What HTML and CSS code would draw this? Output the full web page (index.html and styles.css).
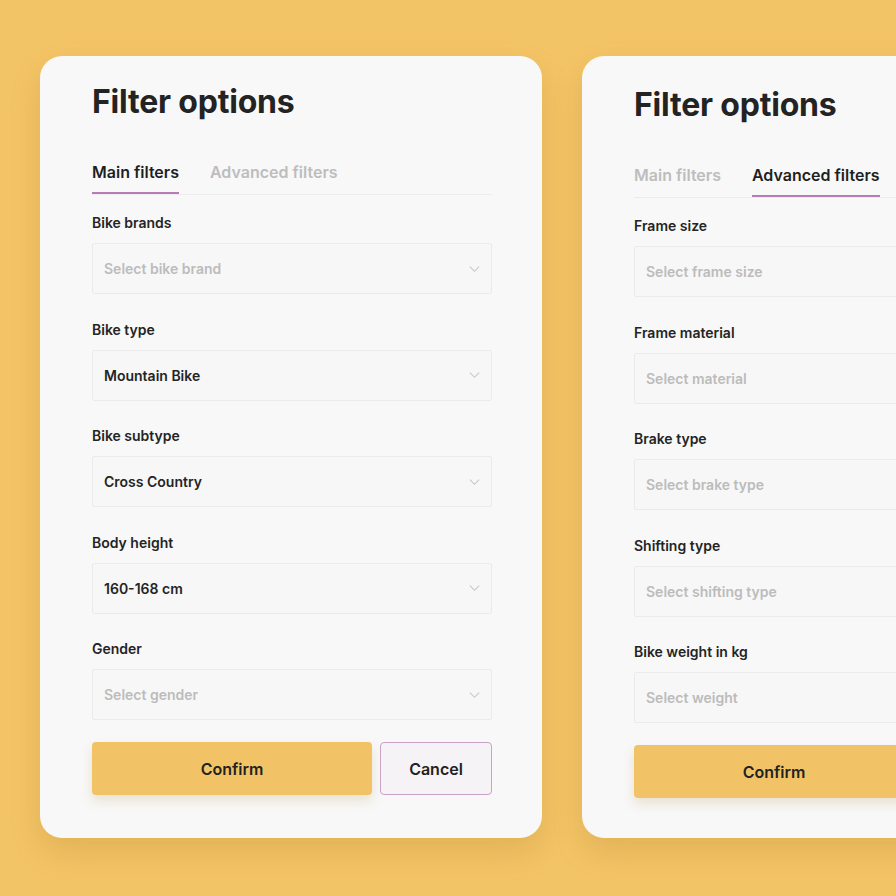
FILE: index.html
```html
<!DOCTYPE html>
<html lang="en">
<head>
<meta charset="utf-8">
<title>Filter options</title>
<link rel="stylesheet" href="styles.css">
</head>
<body>
<main class="stage">
  <section class="card">
    <h1 class="title">Filter options</h1>
    <nav class="tabs">
      <span class="tab tab-active">Main filters</span>
      <span class="tab">Advanced filters</span>
    </nav>
    <div class="fields">
      <div class="field">
        <label class="label">Bike brands</label>
        <div class="select placeholder">Select bike brand<svg class="chev" viewBox="0 0 12 8"><path d="M1 1.5 6 6.5 11 1.5"/></svg></div>
      </div>
      <div class="field">
        <label class="label">Bike type</label>
        <div class="select">Mountain Bike<svg class="chev" viewBox="0 0 12 8"><path d="M1 1.5 6 6.5 11 1.5"/></svg></div>
      </div>
      <div class="field">
        <label class="label">Bike subtype</label>
        <div class="select">Cross Country<svg class="chev" viewBox="0 0 12 8"><path d="M1 1.5 6 6.5 11 1.5"/></svg></div>
      </div>
      <div class="field">
        <label class="label">Body height</label>
        <div class="select">160-168 cm<svg class="chev" viewBox="0 0 12 8"><path d="M1 1.5 6 6.5 11 1.5"/></svg></div>
      </div>
      <div class="field">
        <label class="label">Gender</label>
        <div class="select placeholder">Select gender<svg class="chev" viewBox="0 0 12 8"><path d="M1 1.5 6 6.5 11 1.5"/></svg></div>
      </div>
    </div>
    <div class="actions">
      <button class="btn btn-confirm">Confirm</button>
      <button class="btn btn-cancel">Cancel</button>
    </div>
  </section>

  <section class="card card-shift">
    <h1 class="title">Filter options</h1>
    <nav class="tabs">
      <span class="tab">Main filters</span>
      <span class="tab tab-active">Advanced filters</span>
    </nav>
    <div class="fields">
      <div class="field">
        <label class="label">Frame size</label>
        <div class="select placeholder">Select frame size<svg class="chev" viewBox="0 0 12 8"><path d="M1 1.5 6 6.5 11 1.5"/></svg></div>
      </div>
      <div class="field">
        <label class="label">Frame material</label>
        <div class="select placeholder">Select material<svg class="chev" viewBox="0 0 12 8"><path d="M1 1.5 6 6.5 11 1.5"/></svg></div>
      </div>
      <div class="field">
        <label class="label">Brake type</label>
        <div class="select placeholder">Select brake type<svg class="chev" viewBox="0 0 12 8"><path d="M1 1.5 6 6.5 11 1.5"/></svg></div>
      </div>
      <div class="field">
        <label class="label">Shifting type</label>
        <div class="select placeholder">Select shifting type<svg class="chev" viewBox="0 0 12 8"><path d="M1 1.5 6 6.5 11 1.5"/></svg></div>
      </div>
      <div class="field">
        <label class="label">Bike weight in kg</label>
        <div class="select placeholder">Select weight<svg class="chev" viewBox="0 0 12 8"><path d="M1 1.5 6 6.5 11 1.5"/></svg></div>
      </div>
    </div>
    <div class="actions">
      <button class="btn btn-confirm">Confirm</button>
      <button class="btn btn-cancel">Cancel</button>
    </div>
  </section>
</main>
</body>
</html>
```

FILE: styles.css
```css
* { box-sizing: border-box; }
html, body {
  margin: 0;
  padding: 0;
  width: 896px;
  height: 896px;
  overflow: hidden;
  background: #f3c466;
  font-family: "Inter", "Noto Sans", sans-serif;
  color: #222;
}
.stage {
  display: flex;
  gap: 40px;
  padding: 56px 0 0 40px;
  width: 1200px;
}
.card {
  flex: 0 0 502px;
  width: 502px;
  height: 782px;
  background: #f8f8f8;
  border-radius: 22px;
  padding: 26px 50px 43px 52px;
  display: flex;
  flex-direction: column;
  box-shadow: 0 14px 30px rgba(150, 100, 20, 0.18);
}
.card-shift { padding-top: 29px; }
.title {
  margin: 0;
  font-size: 32px;
  line-height: 40px;
  font-weight: 700;
  letter-spacing: -0.2px;
  color: #232323;
}
.tabs {
  margin-top: 38px;
  display: flex;
  gap: 31px;
  border-bottom: 1px solid #ececec;
}
.tab {
  font-size: 16px;
  line-height: 24px;
  font-weight: 600;
  color: #bdbdbd;
  padding-bottom: 8px;
  border-bottom: 2px solid transparent;
}
.tab-active {
  color: #1f1f1f;
  border-bottom-color: #b97bb3;
}
.fields {
  margin-top: 18px;
  display: flex;
  flex-direction: column;
  gap: 25.5px;
}
.field {
  display: flex;
  flex-direction: column;
  gap: 10px;
}
.label {
  font-size: 14px;
  line-height: 20px;
  font-weight: 600;
  color: #242424;
}
.select {
  height: 51px;
  border: 1px solid #ebebeb;
  border-radius: 2px;
  background: #f7f7f7;
  display: flex;
  align-items: center;
  justify-content: space-between;
  padding: 0 11px 0 11px;
  font-size: 14px;
  font-weight: 600;
  color: #242424;
}
.placeholder { color: #bcbcbc; }
.chev {
  width: 11px;
  height: 8px;
  fill: none;
  stroke: #c6c6c6;
  stroke-width: 1.1;
}
.actions {
  margin-top: 22px;
  display: flex;
  gap: 8px;
}
.btn {
  height: 53px;
  border-radius: 4px;
  font-family: inherit;
  font-size: 16px;
  font-weight: 600;
  color: #222;
  cursor: pointer;
}
.btn-confirm {
  flex: 0 0 280px;
  background: #f2c366;
  border: none;
  box-shadow: 0 6px 12px rgba(160, 110, 20, 0.16);
}
.btn-cancel {
  flex: 1 1 auto;
  background: #f5f3f5;
  border: 1px solid #caa2c6;
}
```
